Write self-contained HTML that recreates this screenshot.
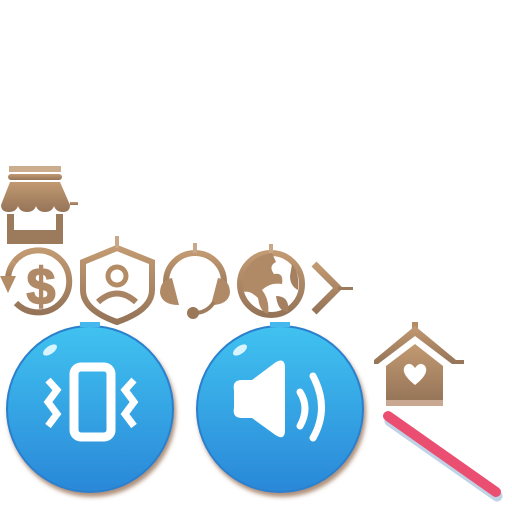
<!DOCTYPE html>
<html><head><style>html,body{margin:0;padding:0;background:#fff;width:512px;height:512px;overflow:hidden}</style></head>
<body>
<svg width="512" height="512" viewBox="0 0 512 512" xmlns="http://www.w3.org/2000/svg">
<defs>
<linearGradient id="br" x1="0" y1="0" x2="0" y2="1"><stop offset="0" stop-color="#c29a72"/><stop offset="1" stop-color="#957458"/></linearGradient>
<linearGradient id="bl" x1="0" y1="0" x2="0" y2="1"><stop offset="0" stop-color="#40c2f0"/><stop offset="1" stop-color="#2a88d8"/></linearGradient>
<filter id="sh"><feDropShadow dx="2" dy="4" stdDeviation="2" flood-color="#8a6040" flood-opacity="0.7"/></filter>
</defs>
<!-- store -->
<g fill="url(#br)">
<rect x="9" y="166" width="52" height="6" fill="#cbac8c"/>
<rect x="8" y="174" width="54" height="6" rx="3"/>
<path d="M10 182 H60 L70 205 Q70 212 63 212 Q56 212 54 206 Q52 212 45 212 Q38 212 36 206 Q34 212 27 212 Q20 212 18 206 Q16 212 9 212 Q1 212 1 205 Z"/>
<rect x="70" y="202" width="8" height="3"/>
<path d="M7 214 H14 V230 H56 V214 H63 V244 H7 Z" fill="#9c7a5c"/>
</g>
<!-- dollar -->
<g fill="none" stroke="url(#br)" stroke-width="6">
<path d="M14 262 A31 31 0 1 1 16 303"/>
<path d="M8 282 A31 31 0 0 1 14 262"/>
</g>
<path d="M0 276 L16 276 L8 293 Z" fill="#b38c66"/>
<text x="41" y="304" font-family="Liberation Sans" font-weight="bold" font-size="52" fill="#b08a66" stroke="#b08a66" stroke-width="1.5" text-anchor="middle">$</text>
<!-- shield -->
<path d="M117 248 L152 262 V290 Q152 310 117 322 Q83 310 83 290 V262 Z" fill="none" stroke="url(#br)" stroke-width="6"/>
<circle cx="117" cy="276" r="9" fill="none" stroke="#b38c66" stroke-width="5"/>
<path d="M98 302 Q117 285 136 302" fill="none" stroke="#a98464" stroke-width="6"/>
<rect x="115" y="236" width="4" height="12" fill="#c8a888"/>
<!-- headset -->
<path d="M166 294 V282 A29 29 0 0 1 224 282 V294" fill="none" stroke="url(#br)" stroke-width="6"/>
<path d="M172 278 L179 305 Q162 305 160 293 Q160 280 172 278 Z" fill="#b08a66"/>
<path d="M218 278 L211 305 Q228 305 230 293 Q230 280 218 278 Z" fill="#b08a66"/>
<path d="M214 302 Q208 312 196 313" fill="none" stroke="#a07c5e" stroke-width="4"/>
<circle cx="193" cy="313" r="6" fill="#9a7858"/>
<rect x="193" y="243" width="4" height="10" fill="#c8a888"/>
<!-- globe -->
<circle cx="271" cy="284" r="31" fill="none" stroke="url(#br)" stroke-width="6"/>
<path d="M243 276 Q250 256 272 253 L276 262 Q268 266 274 274 Q284 272 282 284 Q270 282 262 290 Q270 300 268 314 Q260 312 258 298 Q250 290 243 292 Z" fill="#b08a66"/>
<path d="M292 264 Q300 274 298 290 Q290 286 290 276 Z M276 296 Q290 296 288 312 Q278 312 276 296 Z" fill="#a48060"/>
<rect x="269" y="244" width="4" height="9" fill="#c8a888"/>
<!-- chevron -->
<path d="M314 264 L338 288 L314 312" fill="none" stroke="url(#br)" stroke-width="7"/>
<rect x="338" y="287" width="15" height="3" fill="#9c7a5c"/>
<!-- blue buttons -->
<g filter="url(#sh)">
<circle cx="90" cy="409" r="83" fill="url(#bl)" stroke="#2a80cc" stroke-width="2"/>
<circle cx="280" cy="409" r="83" fill="url(#bl)" stroke="#2a80cc" stroke-width="2"/>
</g>
<rect x="80" y="322" width="20" height="5" fill="#45b8ee"/>
<rect x="270" y="322" width="20" height="5" fill="#45b8ee"/>
<ellipse cx="50" cy="350" rx="8" ry="4" fill="#d8f4ff" transform="rotate(-35 50 350)"/>
<ellipse cx="240" cy="350" rx="8" ry="4" fill="#d8f4ff" transform="rotate(-35 240 350)"/>
<rect x="74" y="367" width="37" height="70" rx="7" fill="none" stroke="#fff" stroke-width="9"/>
<path d="M48 380 L57 390 L48 402 L57 414 L48 426 M134 380 L125 390 L134 402 L125 414 L134 426" fill="none" stroke="#fff" stroke-width="7"/>
<path d="M234 390 Q232 380 242 380 H252 L276 362 Q285 357 285 368 V430 Q285 442 274 434 L252 418 H242 Q232 418 234 408 Z" fill="#fff"/>
<path d="M300 392 Q310 408 300 426" fill="none" stroke="#fff" stroke-width="7" stroke-linecap="round"/>
<path d="M313 376 Q330 408 313 438" fill="none" stroke="#fff" stroke-width="7" stroke-linecap="round"/>
<!-- house -->
<rect x="412" y="322" width="6" height="12" fill="#b38c66"/>
<path d="M374 360 L415 326 L456 360 L464 360 V364 L452 364 L415 336 L378 364 L374 364 Z" fill="url(#br)"/>
<path d="M386 366 L415 344 L443 366 V402 H386 Z" fill="url(#br)"/>
<rect x="386" y="400" width="57" height="6" fill="#c8a890"/>
<path d="M415 385 Q400 373 405 366 Q410 361 415 368 Q420 361 425 366 Q430 373 415 385 Z" fill="#fff"/>
<!-- pink stick -->
<line x1="389" y1="418" x2="496" y2="493" stroke="#4a7fb8" stroke-width="11" stroke-linecap="round" opacity="0.35" transform="translate(1,3)"/>
<line x1="388" y1="416" x2="496" y2="492" stroke="#ea4e70" stroke-width="10" stroke-linecap="round"/>
</svg>
</body></html>
